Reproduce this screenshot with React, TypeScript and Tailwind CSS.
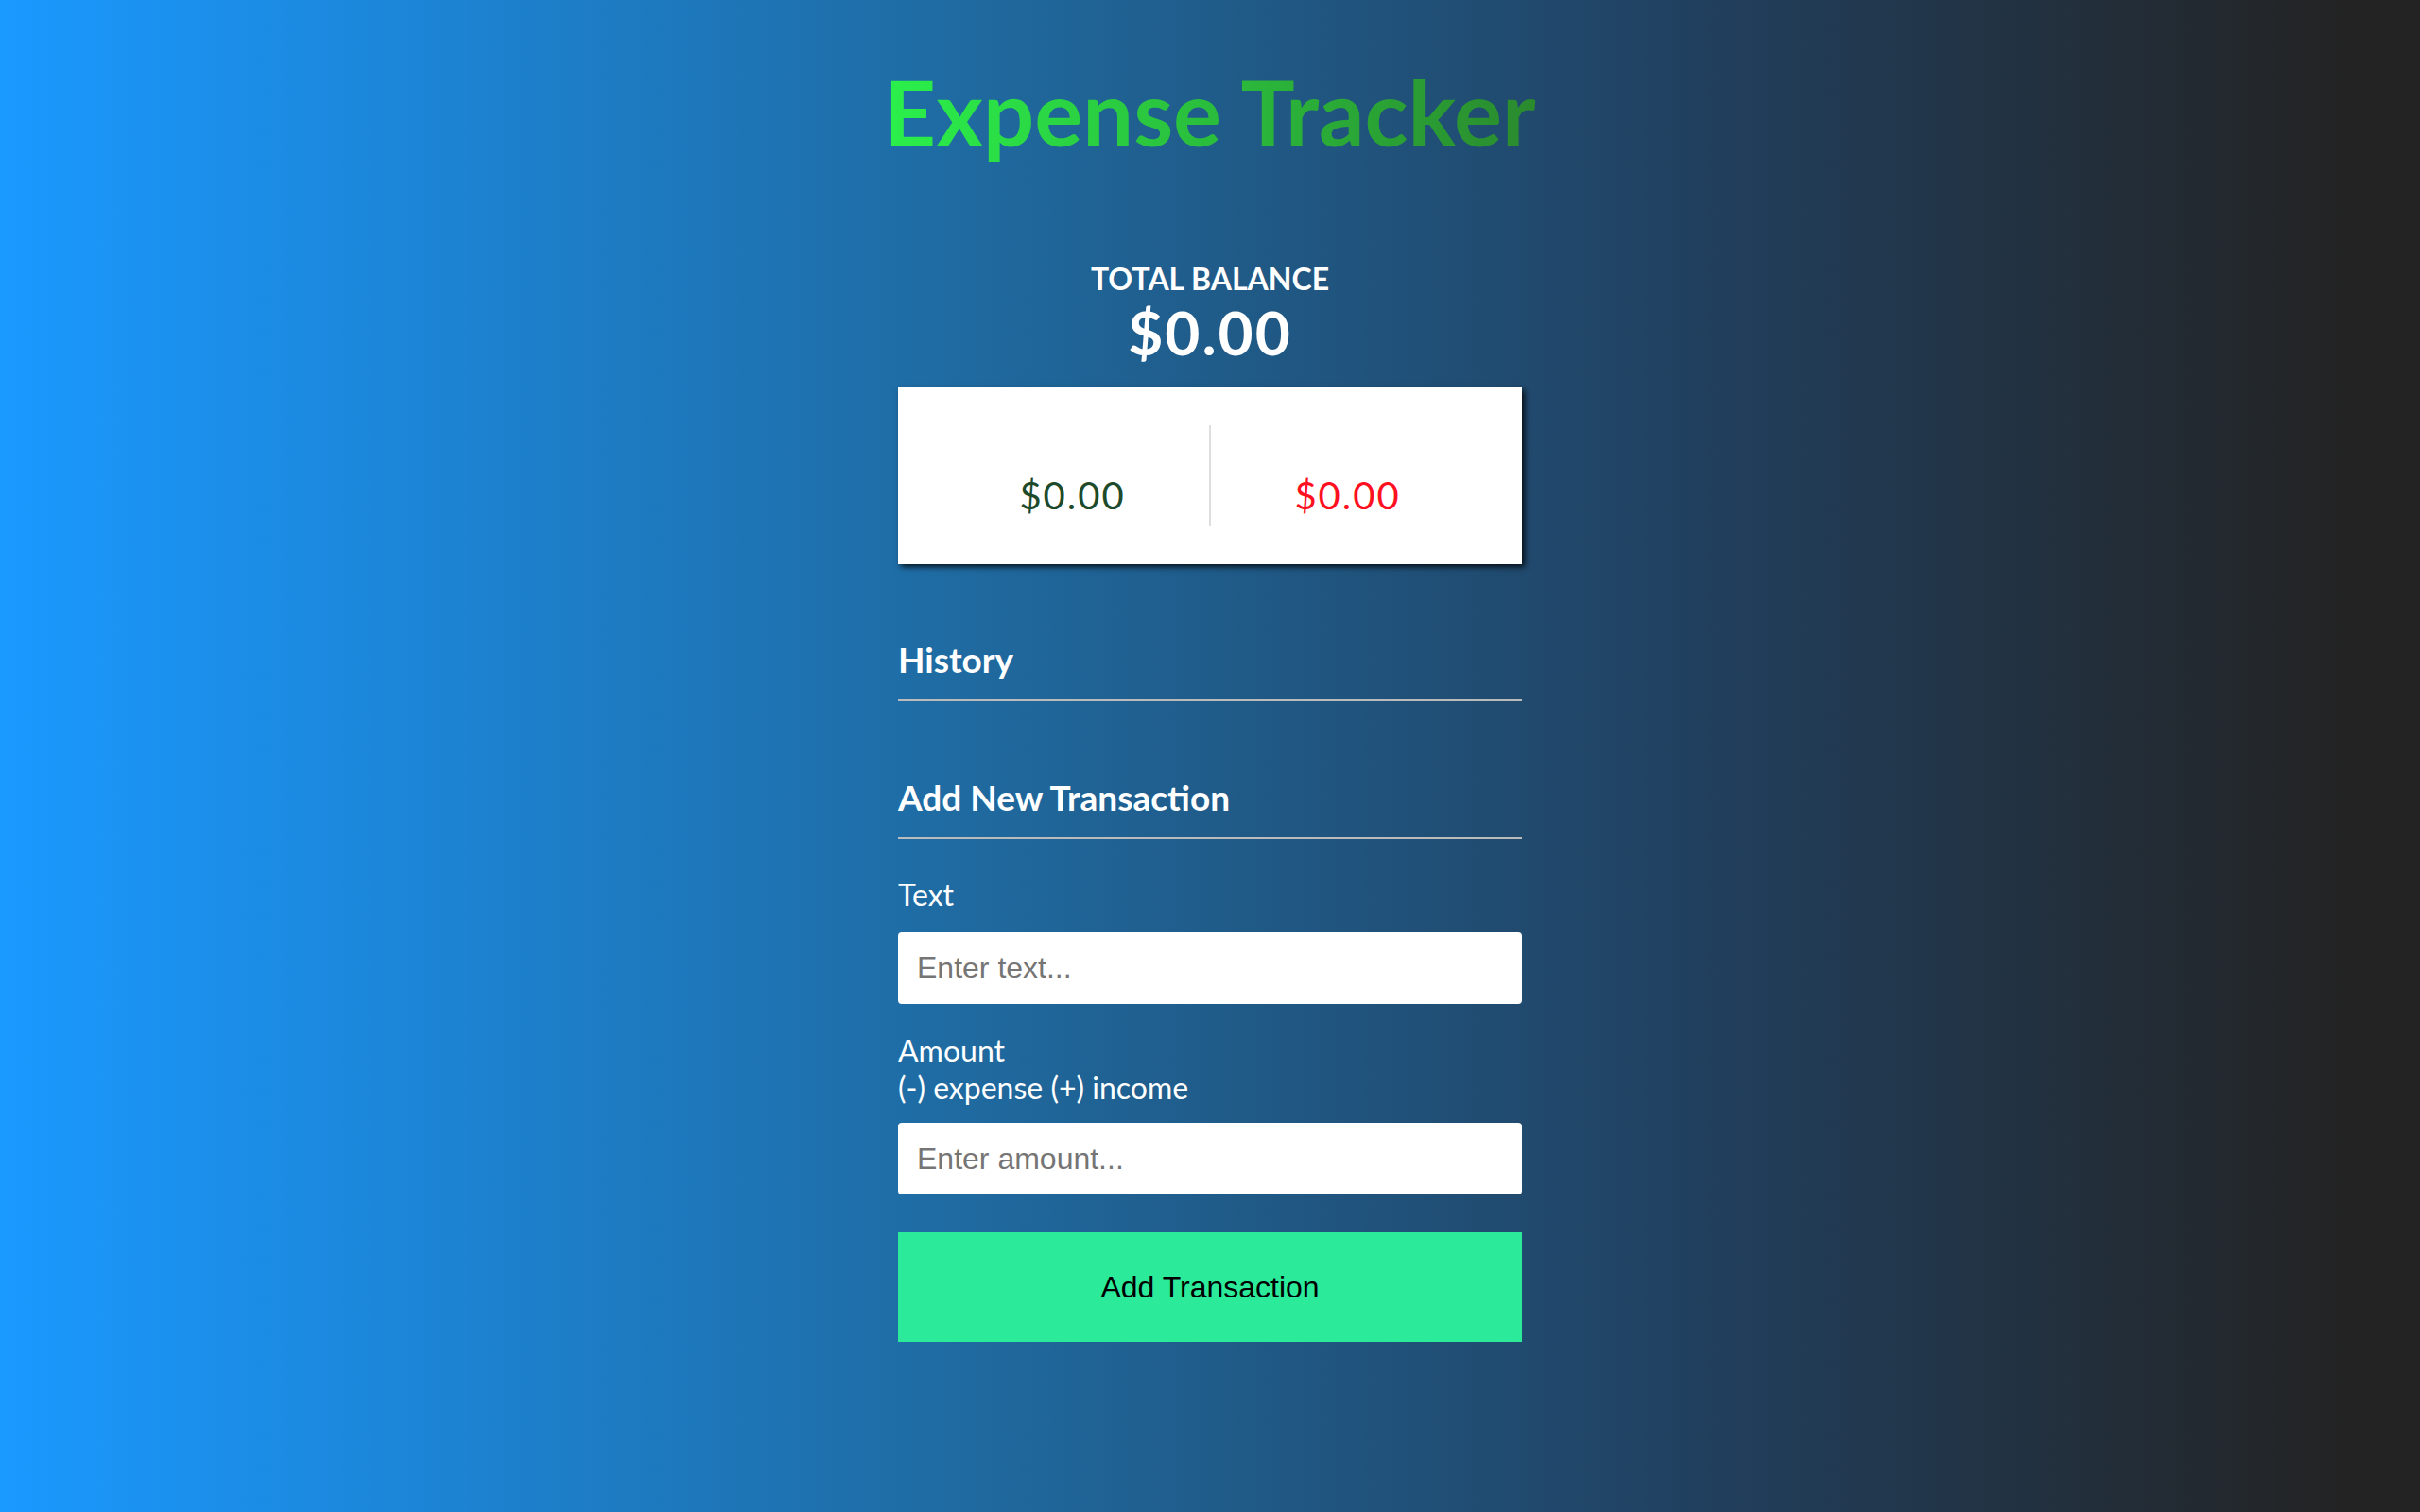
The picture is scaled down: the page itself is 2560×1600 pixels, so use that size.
import { useState } from "react";

const lato = "font-['Lato','Noto_Sans',sans-serif]";
const arial = "font-['Liberation_Sans',Arial,sans-serif]";

const IncomeExpense = () => (
  <div className="mt-[19px] flex bg-white p-10 shadow-[3px_3px_6px_rgba(0,0,0,0.8)]">
    <div className="flex-1 border-r-2 border-[#dedede] text-center">
      <h4 className="m-0 text-[32px] leading-[38.4px] font-bold uppercase text-white">Income</h4>
      <p className="mt-[11px] mb-[9px] text-[40px] leading-[48px] tracking-[2px] text-[#1e4a2c]">$0.00</p>
    </div>
    <div className="flex-1 text-center">
      <h4 className="m-0 text-[32px] leading-[38.4px] font-bold uppercase text-white">Expense</h4>
      <p className="mt-[11px] mb-[9px] text-[40px] leading-[48px] tracking-[2px] text-[#ff1020]">$0.00</p>
    </div>
  </div>
);

const SectionTitle = ({ children, className }: { children: string; className?: string }) => (
  <h3
    className={`border-b-2 border-[#bbbbbb] pb-5 text-[37px] leading-[45px] font-bold text-white ${className ?? ""}`}
  >
    {children}
  </h3>
);

export default function App() {
  const [text, setText] = useState("");
  const [amount, setAmount] = useState("");

  return (
    <div
      className={`min-h-[1600px] w-full bg-[linear-gradient(to_right,#1a99ff,#1f6aa0_40%,#21405f_70%,#232323_97%)] ${lato} text-white`}
    >
      <div className="mx-auto w-[660px] pt-[58px] pb-20">
        <h2 className="-mx-20 text-center text-[95.5px] leading-[120px] font-bold">
          <span className="bg-[linear-gradient(to_right,#2bf04b,#2a8a2e)] bg-clip-text text-transparent">
            Expense Tracker
          </span>
        </h2>

        <div className="mt-[98px] text-center">
          <h4 className="text-[32px] leading-[38.4px] font-bold uppercase">Total Balance</h4>
          <h1 className="text-[64px] leading-[76.8px] font-bold tracking-[2px]">$0.00</h1>
        </div>

        <IncomeExpense />

        <SectionTitle className="mt-[78px]">History</SectionTitle>
        <ul className="m-0 list-none p-0" />

        <SectionTitle className="mt-[79px]">Add New Transaction</SectionTitle>

        <form className="mt-5" onSubmit={(e) => e.preventDefault()}>
          <div>
            <label className="mt-5 inline-block text-[32px] leading-[38.4px]">Text</label>
            <input
              type="text"
              value={text}
              onChange={(e) => setText(e.target.value)}
              placeholder="Enter text..."
              className={`mt-[20px] block h-[76px] w-full rounded-[4px] bg-white px-5 text-[32px] text-black placeholder:text-[#757575] outline-none ${arial}`}
            />
          </div>
          <div>
            <label className="mt-[30px] inline-block text-[32px] leading-[39px]">
              Amount <br />
              (-) expense (+) income
            </label>
            <input
              type="number"
              value={amount}
              onChange={(e) => setAmount(e.target.value)}
              placeholder="Enter amount..."
              className={`mt-[18px] block h-[76px] w-full rounded-[4px] bg-white px-5 text-[32px] text-black placeholder:text-[#757575] outline-none ${arial}`}
            />
          </div>
          <button
            type="submit"
            className={`mt-10 block h-[116px] w-full bg-[#2beb9b] text-[32px] text-black ${arial}`}
          >
            Add Transaction
          </button>
        </form>
      </div>
    </div>
  );
}
